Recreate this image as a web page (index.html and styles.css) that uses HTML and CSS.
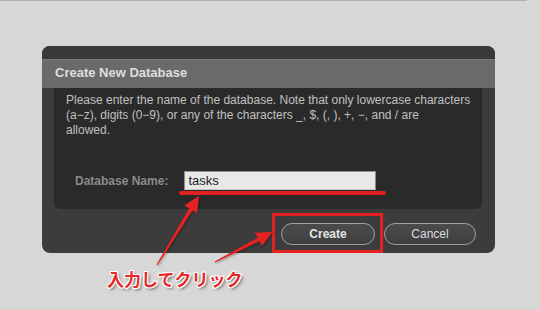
FILE: index.html
```html
<!DOCTYPE html>
<html lang="ja">
<head>
  <meta charset="UTF-8" />
  <title>Create New Database</title>
  <link rel="stylesheet" href="styles.css">
</head>
<body>
  <div class="topline"></div>

  <div class="dialog">
    <div class="dialog-cap"></div>
    <div class="dialog-title">Create New Database</div>
    <div class="dialog-body">
      <div class="panel">
        <p class="desc">Please enter the name of the database. Note that only lowercase characters<br>(a−z), digits (0−9), or any of the characters _, $, (, ), +, −, and / are<br>allowed.</p>
        <div class="field">
          <label for="dbname">Database Name:</label>
          <input id="dbname" type="text" value="tasks">
        </div>
      </div>
    </div>
    <div class="actions">
      <button class="btn btn-primary">Create</button>
      <button class="btn">Cancel</button>
    </div>
  </div>

  <!-- annotation overlay -->
  <div class="mark-underline"></div>
  <div class="mark-box"></div>
  <svg class="arrows" width="540" height="310" viewBox="0 0 540 310">
    <g transform="translate(157 265) rotate(-58.7)">
      <polygon points="0,-0.6 65,-2 65,-7.5 81,0 65,7.5 65,2 0,0.6" />
    </g>
    <g transform="translate(215 262) rotate(-27.4)">
      <polygon points="0,-0.6 49,-2 49,-7.5 65,0 49,7.5 49,2 0,0.6" />
    </g>
  </svg>
  <div class="note">入力してクリック</div>
</body>
</html>
```

FILE: styles.css
```css
body {
  margin: 0;
  width: 540px;
  height: 310px;
  overflow: hidden;
  position: relative;
  background: #d7d7d7;
  font-family: "Liberation Sans", Arial, sans-serif;
}

.topline {
  width: 527px;
  height: 1px;
  background: #b0b0b0;
}

.dialog {
  margin: 45px 0 0 42px;
  width: 453px;
  background: #3c3c3c;
  border-radius: 8px;
  padding-bottom: 8px;
}

.dialog-cap {
  height: 13px;
  background: #393939;
  border-radius: 8px 8px 0 0;
}

.dialog-title {
  height: 26px;
  line-height: 26px;
  padding: 0 0 2px 13px;
  background: #6a6a6a;
  border-top: 1px solid #767676;
  color: #dedede;
  font-size: 13px;
  font-weight: bold;
}

.dialog-body {
  padding: 0 13px 0 12px;
}

.panel {
  background: #2a2a2a;
  border-radius: 0 0 6px 6px;
  padding: 5px 4px 19px 12px;
}

.desc {
  margin: 0;
  font-size: 12px;
  line-height: 15px;
  color: #c0c0c0;
  white-space: nowrap;
}

.field {
  display: flex;
  align-items: center;
  gap: 16px;
  margin-top: 33px;
  padding-left: 9px;
}

.field label {
  font-size: 12px;
  font-weight: bold;
  color: #8a8a8a;
}

.field input {
  width: 192px;
  height: 19px;
  box-sizing: border-box;
  margin: 0;
  padding: 0 3px;
  border: 1px solid #8c8c8c;
  border-bottom-color: #c8c8c8;
  background: #e8e8e8;
  color: #222;
  font-family: "Liberation Sans", Arial, sans-serif;
  font-size: 13px;
  outline: none;
}

.actions {
  display: flex;
  justify-content: flex-end;
  gap: 9px;
  padding: 14px 19px 0 0;
}

.btn {
  width: 92px;
  height: 22px;
  padding: 0;
  border: 1px solid #a0a0a0;
  border-radius: 11px;
  background: linear-gradient(#4b4b4b, #3f3f3f);
  color: #dcdcdc;
  font-family: "Liberation Sans", Arial, sans-serif;
  font-size: 12px;
}

.btn-primary {
  width: 94px;
  font-weight: bold;
  color: #e4e4e4;
}

.mark-underline {
  position: absolute;
  left: 179px;
  top: 191px;
  width: 207px;
  height: 4px;
  border-radius: 2px;
  background: #e22020;
}

.mark-box {
  position: absolute;
  left: 272px;
  top: 213px;
  width: 105px;
  height: 34px;
  border: 3px solid #e52222;
}

.arrows {
  position: absolute;
  left: 0;
  top: 0;
  pointer-events: none;
  fill: #e52222;
  filter: drop-shadow(1px 1px 1px rgba(0, 0, 0, 0.35));
}

.note {
  position: absolute;
  left: 107px;
  top: 268px;
  font-family: "Noto Sans CJK JP", sans-serif;
  font-size: 17px;
  font-weight: bold;
  line-height: 22px;
  color: #e52a2a;
  text-shadow:
    -1px -1px 0 #fff, 1px -1px 0 #fff, -1px 1px 0 #fff, 1px 1px 0 #fff,
    0 -1px 0 #fff, 0 1px 0 #fff, -1px 0 0 #fff, 1px 0 0 #fff,
    2px 2px 3px rgba(0, 0, 0, 0.55);
}
```
